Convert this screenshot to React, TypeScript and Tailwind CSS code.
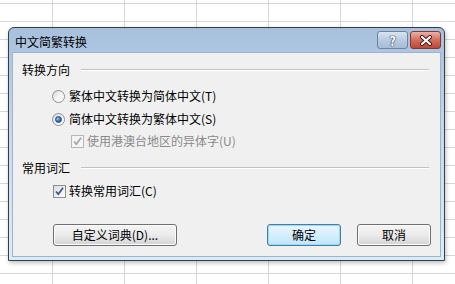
const colWidths = ["w-[53px]", "w-[72px]", "w-[72px]", "w-[72px]", "w-[72px]", "w-[72px]", "w-[72px]"]

const GridRow = ({ h }: { h: string }) => (
  <div className={`flex shrink-0 border-b border-[#d6d6d6] ${h}`}>
    {colWidths.map((w, i) => (
      <div key={i} className={`${w} shrink-0 border-r border-[#d6d6d6]`} />
    ))}
  </div>
)

const Radio = ({ checked }: { checked?: boolean }) => (
  <span className="flex h-[13px] w-[13px] shrink-0 items-center justify-center rounded-full border border-[#8e8f8f] bg-gradient-to-br from-[#d8d8d8] via-[#f4f4f4] to-[#ffffff]">
    {checked && (
      <span className="h-[7px] w-[7px] rounded-full border border-[#1d4b86] bg-[radial-gradient(circle_at_35%_35%,#9ccbf2,#2a67b3_60%,#163f7a)]" />
    )}
  </span>
)

const Check = ({ disabled }: { disabled?: boolean }) => (
  <span
    className={`flex h-[13px] w-[13px] shrink-0 items-center justify-center border ${
      disabled ? "border-[#b7b7b7] bg-[#f4f4f4]" : "border-[#8e8f8f] bg-gradient-to-br from-[#dcdcdc] to-[#ffffff]"
    }`}
  >
    <svg width="11" height="11" viewBox="0 0 11 11">
      <path
        d="M2 5.5 L4.3 8.2 L9 1.8"
        fill="none"
        stroke={disabled ? "#a8a8a8" : "#3d5a96"}
        strokeWidth="1.8"
        strokeLinejoin="round"
      />
    </svg>
  </span>
)

const Heading = ({ children }: { children: string }) => (
  <div className="flex h-[20px] items-center pl-[9px] pr-[11px]">
    <span>{children}</span>
    <div className="ml-[11px] flex-1 border-t border-b border-t-[#c2c2c2] border-b-white" />
  </div>
)

const Btn = ({ w, def, children }: { w: string; def?: boolean; children: string }) => (
  <div
    className={`flex h-[22px] ${w} items-center justify-center rounded-[3px] border ${
      def
        ? "border-[#3c7fb1] bg-gradient-to-b from-[#eaf6fd] to-[#bee6fd] shadow-[inset_0_0_0_1px_#a4d6f2]"
        : "border-[#707070] bg-gradient-to-b from-[#f4f4f4] via-[#ebebeb] to-[#d4d4d4] shadow-[inset_0_0_0_1px_#fcfcfc]"
    }`}
  >
    {children}
  </div>
)

const App = () => {
  return (
    <div
      className="relative h-[284px] w-[455px] overflow-hidden bg-white text-[12px] leading-[16px] text-black"
      style={{ fontFamily: '"Noto Sans CJK SC", "Noto Sans", sans-serif' }}
    >
      {/* sheet grid */}
      <div className="flex flex-col">
        <GridRow h="h-[4px]" />
        {Array.from({ length: 16 }).map((_, i) => (
          <GridRow key={i} h="h-[18px]" />
        ))}
      </div>

      {/* dialog */}
      <div className="absolute left-[8px] top-[27px] flex h-[234px] w-[437px] flex-col rounded-t-[6px] border border-[#363d45] bg-gradient-to-b from-[#a7c0dd] via-[#c9dbee] to-[#d7eef7] shadow-[1px_2px_4px_rgba(0,0,0,0.25)]">
        <div className="flex h-[24px] shrink-0 items-start justify-between pl-[6px] pr-[3px]">
          <span className="mt-[6px]">中文简繁转换</span>
          <div className="mt-[3px] flex gap-[2px]">
            <div className="flex h-[18px] w-[31px] items-center justify-center rounded-[3px] border border-[#6f839c] bg-gradient-to-b from-[#dae5f1] via-[#b8cbe1] to-[#a6bcd6]">
              <span className="text-[13px] font-bold leading-none text-white [text-shadow:0_0_1px_#2b3b55,0_0_1px_#2b3b55,0_0_1px_#2b3b55]">?</span>
            </div>
            <div className="flex h-[18px] w-[31px] items-center justify-center rounded-[3px] border border-[#7d3a32] bg-gradient-to-b from-[#eab1a5] via-[#d26d5d] to-[#bf4634]">
              <svg width="14" height="11" viewBox="0 0 14 11">
                <path d="M3 2 L11 9 M11 2 L3 9" stroke="#3a1611" strokeWidth="4" strokeLinecap="round" />
                <path d="M3 2 L11 9 M11 2 L3 9" stroke="#ffffff" strokeWidth="2.2" strokeLinecap="round" />
              </svg>
            </div>
          </div>
        </div>

        <div className="mx-[3px] mb-[3px] flex flex-1 flex-col border border-[#9fb4cc] bg-[#f0f0f0] pt-[7px]">
          <Heading>转换方向</Heading>
          <div className="mt-[5px] flex h-[22px] items-center gap-[4px] pl-[39px]">
            <Radio />
            <span>繁体中文转换为简体中文(T)</span>
          </div>
          <div className="mt-[1px] flex h-[22px] items-center gap-[4px] pl-[39px]">
            <Radio checked />
            <span>简体中文转换为繁体中文(S)</span>
          </div>
          <div className="flex h-[22px] items-center gap-[3px] pl-[58px] text-[#8a8a8a]">
            <Check disabled />
            <span>使用港澳台地区的异体字(U)</span>
          </div>
          <div className="mt-[6px]">
            <Heading>常用词汇</Heading>
          </div>
          <div className="mt-[2px] flex h-[22px] items-center gap-[3px] pl-[40px]">
            <Check />
            <span>转换常用词汇(C)</span>
          </div>
          <div className="mt-[22px] flex items-center pl-[40px] pr-[9px]">
            <Btn w="w-[124px]">自定义词典(D)...</Btn>
            <div className="flex-1" />
            <Btn w="w-[74px]" def>
              确定
            </Btn>
            <div className="w-[16px]" />
            <Btn w="w-[74px]">取消</Btn>
          </div>
        </div>
      </div>
    </div>
  )
}

export default App
